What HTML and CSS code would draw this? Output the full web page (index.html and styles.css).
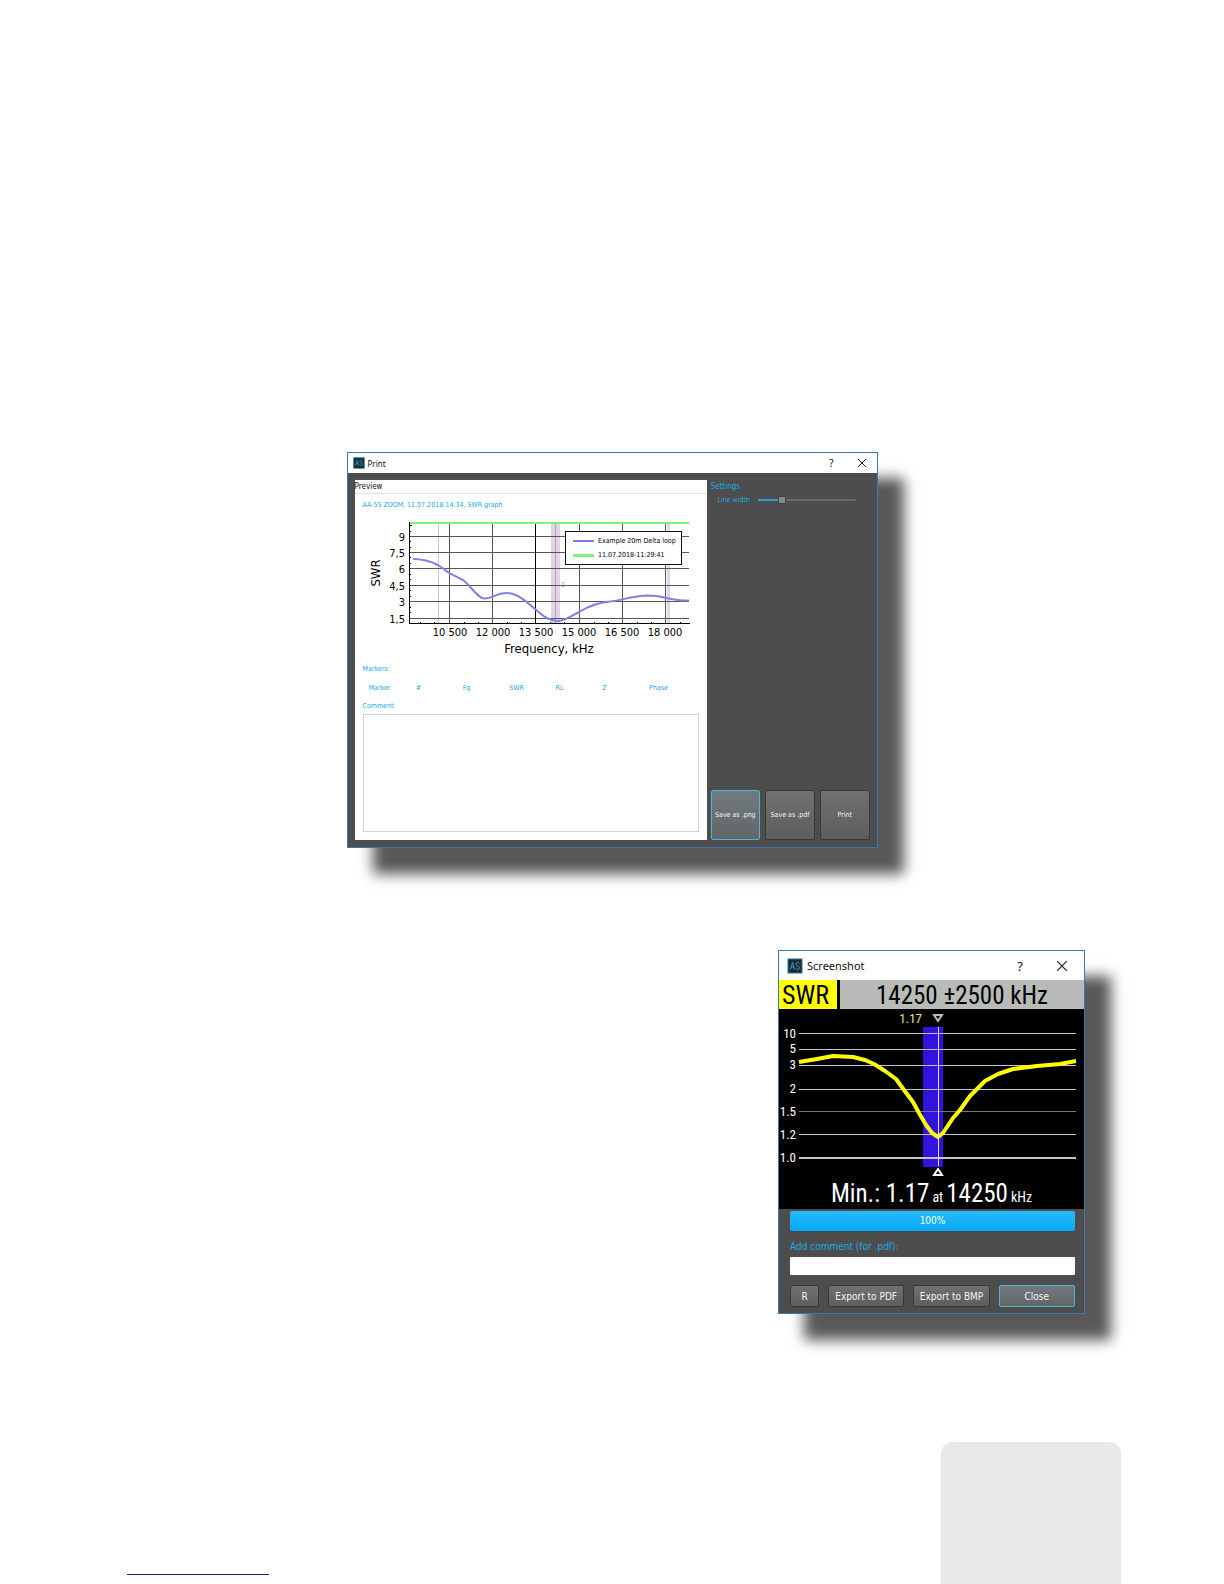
FILE: index.html
```html
<!DOCTYPE html>
<html lang="en">
<head>
<meta charset="utf-8">
<meta name="viewport" content="width=device-width, initial-scale=1">
<title>Print and Screenshot windows</title>
<link rel="stylesheet" href="styles.css">
</head>
<body>
<main class="page">

  <section class="window print" aria-label="Print">
    <header class="titlebar">
      <svg class="logo" viewBox="0 0 16 16" aria-hidden="true"><rect x="1" y="1" width="14" height="14" fill="#1c2b36" stroke="#1f7796"/><path d="M3.500 11.500l2-7 2 7M4 9h3M12.500 5.500q-1-1-2.300-.8-1.200.3-1.200 1.600 0 1 1.700 1.500 1.800.6 1.800 1.900 0 1.500-1.500 1.700-1.500.1-2.300-1" fill="none" stroke="#2f9dc0"/></svg>
      <h2 class="title">Print</h2>
      <button class="tool" type="button">?</button>
      <button class="tool" type="button" aria-label="Close"><svg class="cross" viewBox="0 0 10 10"><path d="M1 1l8 8M9 1l-8 8"/></svg></button>
    </header>
    <div class="print-body">
      <div class="preview">
        <h3 class="preview-head">Preview</h3>
        <div class="sheet">
          <p class="caption">AA-55 ZOOM, 11.07.2018-14:34, SWR graph</p>
          <svg class="graph" viewBox="363 515 336 145" role="img" aria-label="SWR graph">
            <rect x="551" y="523" width="9" height="100" fill="#dad7e8"/>
            <rect x="667" y="523" width="3" height="100" fill="#dcd8ea"/>
            <path d="M438.500 523v100" stroke="#c9c9c9"/>
            <path d="M555.500 523v100" stroke="#dc8fae"/>
            <path class="grid" d="M410 536.500H689M410 552.500H689M410 568.500H689M410 585.500H689M410 601.500H689M410 618.500H689M449.500 523V623M492.500 523V623M579.500 523V623M622.500 523V623M665.500 523V623"/>
            <path class="axis" d="M535.500 523V623M409.500 522V624M409 623.500H690"/>
            <path class="axis" d="M410 525.500h2M410 531.500h1M410 541.500h1M410 547.500h1M410 557.500h1M410 563.500h1M410 574.500h1M410 579.500h1M410 590.500h1M410 596.500h1M410 607.500h1M410 612.500h1M420.500 622v2M434.500 622v2M464.500 622v2M478.500 622v2M507.500 622v2M521.500 622v2M550.500 622v2M564.500 622v2M594.500 622v2M608.500 622v2M637.500 622v2M651.500 622v2M680.500 622v2"/>
            <path d="M410 523H689" stroke="#7df37d" stroke-width="2"/>
            <path class="trace" d="M413 559C423 559 430 561 438 565C443 568 446 571 450 573.500C455 576 459 578 463 580C471 586 478 599 485 598.500C493 598.500 495 593 507 593C517 593 527 602 535 609C544 617 550 621 558 621C565 621 571 616 579 612C591 605 600 602 610 601.500C623 600 632 596 648 595.500C662 595.500 673 601 689 600.500"/>
            <text class="mark" x="561" y="587">1</text>
            <rect x="565.500" y="531.500" width="116" height="33" fill="#fff" stroke="#111"/>
            <path d="M573 541H594" stroke="#8080e6" stroke-width="2"/>
            <path d="M573 555.500H594" stroke="#7df37d" stroke-width="3"/>
            <text class="legend" x="598" y="543">Example 20m Delta loop</text>
            <text class="legend" x="598" y="557">11.07.2018-11:29:41</text>
            <g class="tick end"><text x="405" y="541">9</text><text x="405" y="557">7,5</text><text x="405" y="573">6</text><text x="405" y="590">4,5</text><text x="405" y="606">3</text><text x="405" y="623">1,5</text></g>
            <g class="tick mid"><text x="450" y="636">10 500</text><text x="493" y="636">12 000</text><text x="536" y="636">13 500</text><text x="579" y="636">15 000</text><text x="622" y="636">16 500</text><text x="665" y="636">18 000</text></g>
            <text class="name mid" x="549" y="653">Frequency, kHz</text>
            <text class="name mid" transform="translate(380 573) rotate(-90)">SWR</text>
          </svg>
          <h4 class="caption">Markers:</h4>
          <table class="markers">
            <colgroup><col class="c1"><col class="c2"><col class="c3"><col class="c4"><col class="c5"><col class="c6"><col class="c7"></colgroup>
            <thead><tr><th>Marker</th><th>#</th><th>Fq</th><th>SWR</th><th>RL</th><th>Z</th><th>Phase</th></tr></thead>
          </table>
          <label class="caption" for="note">Comment:</label>
          <textarea class="note" id="note"></textarea>
        </div>
      </div>
      <div class="side">
        <h3 class="side-head">Settings</h3>
        <div class="field"><label class="field-label" for="width">Line width</label><input class="slider" id="width" type="range" min="0" max="100" value="22"></div>
        <div class="actions">
          <button class="btn tall focus" type="button">Save as .png</button>
          <button class="btn tall" type="button">Save as .pdf</button>
          <button class="btn tall" type="button">Print</button>
        </div>
      </div>
    </div>
  </section>

  <section class="window shot" aria-label="Screenshot">
    <header class="titlebar">
      <svg class="logo" viewBox="0 0 16 16" aria-hidden="true"><rect x="1" y="1" width="14" height="14" fill="#1c2b36" stroke="#1f7796"/><path d="M3.500 11.500l2-7 2 7M4 9h3M12.500 5.500q-1-1-2.300-.8-1.200.3-1.200 1.600 0 1 1.700 1.500 1.800.6 1.800 1.900 0 1.500-1.500 1.700-1.500.1-2.300-1" fill="none" stroke="#2f9dc0"/></svg>
      <h2 class="title">Screenshot</h2>
      <button class="tool" type="button">?</button>
      <button class="tool" type="button" aria-label="Close"><svg class="cross" viewBox="0 0 10 10"><path d="M1 1l8 8M9 1l-8 8"/></svg></button>
    </header>
    <div class="lcd">
      <div class="lcd-head"><span class="mode">SWR</span><span class="range">14250 ±2500 kHz</span></div>
      <svg class="lcd-graph" viewBox="779 1009 305 169" role="img" aria-label="SWR 1.17 at 14250 kHz">
        <rect x="923" y="1027" width="20" height="140" fill="#3412de"/>
        <path d="M799 1033.500H1076M799 1049.500H1076M799 1065.500H1076M799 1089.500H1076M799 1134.500H1076" stroke="#c4c4c4"/>
        <path d="M799 1111.500H1076" stroke="#777"/>
        <path d="M799 1158H1076" stroke="#c4c4c4" stroke-width="2"/>
        <path d="M799 1062L817 1059L833 1056L853 1057L865 1060L874 1064L885 1071L896 1079L904 1090L913 1102L919 1113L926 1125L932 1133L938 1137L943 1133L953 1118L960 1110L970 1096L985 1081L998 1074L1013 1069L1037 1066L1060 1064L1076 1061" fill="none" stroke="#ff0" stroke-width="4" stroke-linejoin="round"/>
        <path d="M938.500 1027V1166" stroke="#e4e0f4"/>
        <path d="M934 1015H942L938 1021Z" fill="none" stroke="#bbb" stroke-width="2"/>
        <path d="M934 1175H942L938 1169Z" fill="none" stroke="#fff" stroke-width="2"/>
        <text class="lcd-num peak" x="922" y="1023">1.17</text>
        <g class="lcd-num"><text x="796" y="1038">10</text><text x="796" y="1053">5</text><text x="796" y="1069">3</text><text x="796" y="1093">2</text><text x="796" y="1116">1.5</text><text x="796" y="1139">1.2</text><text x="796" y="1162">1.0</text></g>
      </svg>
      <p class="readout"><span>Min.: 1.17</span> <small>at</small> <span>14250</span> <small>kHz</small></p>
    </div>
    <form class="shot-form">
      <div class="progress" role="progressbar" aria-valuenow="100" aria-valuemin="0" aria-valuemax="100" aria-label="Loading">100%</div>
      <label class="shot-label" for="comment">Add comment (for .pdf):</label>
      <input class="text" id="comment" type="text">
      <div class="buttons">
        <button class="btn small" type="button">R</button>
        <button class="btn" type="button">Export to PDF</button>
        <button class="btn" type="button">Export to BMP</button>
        <button class="btn focus" type="button">Close</button>
      </div>
    </form>
  </section>

  <footer class="footer">
    <a class="site" href="#" aria-label="Website"></a>
    <div class="tab"></div>
  </footer>
</main>
</body>
</html>
```
FILE: styles.css
```css
* { box-sizing: border-box; }

body {
  margin: 0;
  background: #fff;
  color: #111;
  font-family: "DejaVu Sans Condensed", "DejaVu Sans", sans-serif;
}

h2, h3, h4, p { margin: 0; font-weight: 400; }

button, input, textarea { font-family: inherit; }

.page {
  display: flex;
  flex-direction: column;
  min-height: 100vh;
  padding-top: 452px;
}

.window {
  display: flex;
  flex-direction: column;
  max-width: 100%;
  border: 1px solid #3a79a8;
  background: #4d4d4d;
  box-shadow: 26px 26px 13px #595757;
}

.print { align-self: center; width: 531px; min-height: 396px; }

.shot { align-self: flex-end; width: 307px; margin: 102px 139px 0 0; }

/* Title bars */
.titlebar {
  display: flex;
  align-items: center;
  height: 29px;
  padding: 0 14px 0 8px;
  background: #fff;
}

.print .titlebar { height: 20px; padding: 0 10px 0 5px; }

.logo { width: 16px; height: 16px; }
.print .logo { width: 12px; height: 12px; }

.title {
  flex: 1;
  margin-left: 4px;
  font: 11px "Noto Sans", sans-serif;
}

.print .title { margin-left: 3px; font-size: 8px; }

.tool {
  display: grid;
  place-items: center;
  width: 16px;
  height: 20px;
  margin-left: 26px;
  padding: 0;
  border: 0;
  background: none;
  color: #111;
  font: 13px "Noto Sans", sans-serif;
}

.print .tool { width: 10px; margin-left: 20px; font-size: 10px; }

.cross { width: 12px; height: 12px; fill: none; stroke: #222; }
.print .cross { width: 10px; height: 10px; }

/* Print window */
.print-body {
  display: flex;
  flex: 1;
  gap: 4px;
  padding: 7px;
  font-size: 8px;
}

.preview { display: flex; flex: 1; flex-direction: column; background: #fff; }

.preview-head {
  height: 14px;
  border-bottom: 1px solid #e2e2e2;
  font-size: 8px;
  line-height: 13px;
}

.sheet {
  display: flex;
  flex: 1;
  flex-direction: column;
  padding: 6px 8px 8px;
}

.caption {
  color: #1ba9e8;
  font-size: 7px;
  line-height: 10px;
}

.graph { width: 100%; margin: 5px 0 4px; }

.grid { fill: none; stroke: #555; }
.axis { fill: none; stroke: #000; }
.trace { fill: none; stroke: #8080e6; stroke-width: 2; }
.legend { font-size: 7px; }
.mark { fill: #d65c86; font-size: 7px; }
.tick { font-size: 11px; }
.name { font-size: 13px; }
.mid { text-anchor: middle; }
.end { text-anchor: end; }

.markers {
  table-layout: fixed;
  width: 330px;
  margin: 8px 0 7px -3px;
  border-collapse: collapse;
  color: #1ba9e8;
  font-size: 7px;
  line-height: 12px;
}

.markers th { padding: 0; font-weight: 400; }
.c1 { width: 40px; }
.c2 { width: 38px; }
.c3 { width: 58px; }
.c4 { width: 42px; }
.c5 { width: 44px; }
.c6 { width: 46px; }
.c7 { width: 62px; }

.note {
  flex: 1;
  width: 100%;
  margin-top: 3px;
  border: 1px solid #d2d2d4;
  background: #fff;
  resize: none;
}

.side { display: flex; flex-direction: column; width: 159px; color: #1ba9e8; }

.side-head { font-size: 8px; line-height: 13px; }

.field {
  display: flex;
  align-items: center;
  gap: 8px;
  padding: 1px 14px 0 7px;
}

.field-label { font-size: 7px; }

.slider {
  flex: 1;
  width: 0;
  height: 12px;
  margin: 0;
  appearance: none;
  background: linear-gradient(90deg, #2d9fd6 22%, #6a6a6a 22%) center / 100% 2px no-repeat;
}

.slider::-webkit-slider-thumb {
  appearance: none;
  width: 8px;
  height: 8px;
  border: 1px solid #444;
  border-radius: 1px;
  background: #888;
}

.actions { display: flex; gap: 5px; margin-top: auto; }

.btn {
  flex: 1;
  height: 22px;
  padding: 0;
  border: 1px solid #393939;
  border-radius: 2px;
  background: linear-gradient(#717171, #5d5d5d);
  color: #f4f4f4;
  font-size: 10px;
  white-space: nowrap;
}

.tall { height: 50px; font-size: 7px; }
.small { flex: 0 0 29px; }
.focus { border-color: #4fb4dc; background: linear-gradient(#707a7d, #616668); }

/* Screenshot window */
.lcd { background: #000; color: #fff; font-family: "Roboto Condensed", "Liberation Sans Narrow", "Roboto", sans-serif; }

.lcd-head {
  display: flex;
  gap: 3px;
  height: 29px;
  color: #000;
  font-size: 25px;
  line-height: 31px;
}

.mode { width: 58px; padding-left: 3px; background: #ff0; font-size: 26px; }
.range { flex: 1; background: #b9bbb8; text-align: center; }

.lcd-graph { display: block; width: 100%; }
.lcd-num { fill: #fff; font-size: 13px; text-anchor: end; }
.peak { fill: #e2ea6c; }

.readout {
  display: flex;
  align-items: baseline;
  justify-content: center;
  gap: 3px;
  height: 31px;
  font-size: 25px;
  line-height: 31px;
  white-space: nowrap;
}

.readout small { font-size: 14px; }

.shot-form {
  display: flex;
  flex-direction: column;
  padding: 2px 9px 6px 11px;
}

.progress {
  height: 20px;
  border-radius: 2px;
  background: linear-gradient(#27baff, #08a9f8);
  color: #fff;
  font-size: 10px;
  line-height: 20px;
  text-align: center;
}

.shot-label {
  margin-top: 9px;
  color: #1ba9e8;
  font-size: 10px;
  line-height: 14px;
}

.text {
  height: 18px;
  margin-top: 3px;
  border: 0;
  border-radius: 1px;
  background: #fff;
}

.buttons { display: flex; gap: 9px; margin-top: 10px; }

/* Page foot */
.footer {
  display: flex;
  flex: 1;
  align-items: flex-end;
  justify-content: space-between;
  padding: 120px 103px 0 127px;
}

.site { width: 142px; margin-bottom: 9px; border-bottom: 1px solid #1a1a80; }

.tab {
  width: 180px;
  height: 142px;
  border-radius: 12px 12px 0 0;
  background: #e8e8e8;
}
```
